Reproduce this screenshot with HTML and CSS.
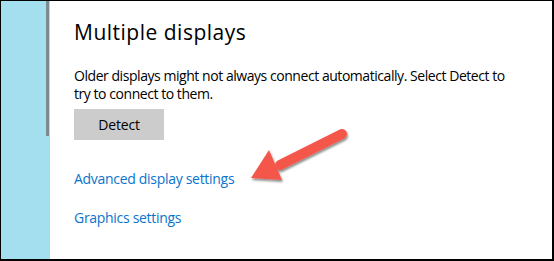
FILE: index.html
```html
<!DOCTYPE html>
<html lang="en">
<head>
  <meta charset="UTF-8" />
  <title>Multiple displays</title>
  <link rel="stylesheet" href="styles.css">
</head>
<body>
  <div class="frame">
    <div class="sidebar">
      <div class="scrollbar"></div>
    </div>

    <div class="content">
      <h2>Multiple displays</h2>
      <p>Older displays might not always connect automatically. Select Detect to try to connect to them.</p>
      <button class="detect-btn">Detect</button>
      <a href="#" class="link first">Advanced display settings</a>
      <a href="#" class="link">Graphics settings</a>

      <!-- callout arrow drawn over the page -->
      <svg class="callout" width="120" height="70" viewBox="0 0 120 70">
        <defs>
          <filter id="shade" x="-20%" y="-20%" width="140%" height="150%">
            <feDropShadow dx="1" dy="2" stdDeviation="1.2" flood-color="#000" flood-opacity="0.45"/>
          </filter>
        </defs>
        <g filter="url(#shade)" fill="#f4574a">
          <line x1="92" y1="13" x2="30" y2="44" stroke="#f4574a" stroke-width="10" stroke-linecap="round"/>
          <polygon points="1,57 19,29 32,59"/>
        </g>
      </svg>
    </div>
  </div>
</body>
</html>
```

FILE: styles.css
```css
* {
  box-sizing: border-box;
}

body {
  margin: 0;
  font-family: "Open Sans", "Noto Sans", sans-serif;
  background: #fff;
}

.frame {
  display: flex;
  width: 554px;
  height: 261px;
  border-top: 1px solid #000;
  border-left: 1px solid #000;
  border-right: 2px solid #000;
  border-bottom: 2px solid #000;
}

.sidebar {
  width: 49px;
  background: #a4dff0;
  display: flex;
  justify-content: flex-end;
}

.scrollbar {
  width: 3px;
  height: 135px;
  background: #7b8b90;
  margin-right: 1px;
}

.content {
  flex: 1;
  position: relative;
  padding: 18px 0 0 24px;
  color: #000;
}

h2 {
  margin: 0;
  font-size: 21px;
  font-weight: 400;
  letter-spacing: 0.5px;
  line-height: 26px;
}

p {
  margin: 22px 0 0;
  font-size: 14px;
  letter-spacing: -0.45px;
  line-height: 18px;
  width: 445px;
}

.detect-btn {
  display: block;
  margin-top: 6px;
  width: 90px;
  height: 31px;
  border: none;
  background: #cccccc;
  font-family: inherit;
  font-size: 14px;
  letter-spacing: -0.2px;
  color: #000;
}

.link {
  display: block;
  color: #0a74cc;
  text-decoration: none;
  font-size: 14px;
  letter-spacing: -0.3px;
  line-height: 19px;
}

.link.first {
  margin-top: 29px;
}

.link + .link {
  margin-top: 20px;
}

.callout {
  position: absolute;
  left: 200px;
  top: 120px;
}
```
